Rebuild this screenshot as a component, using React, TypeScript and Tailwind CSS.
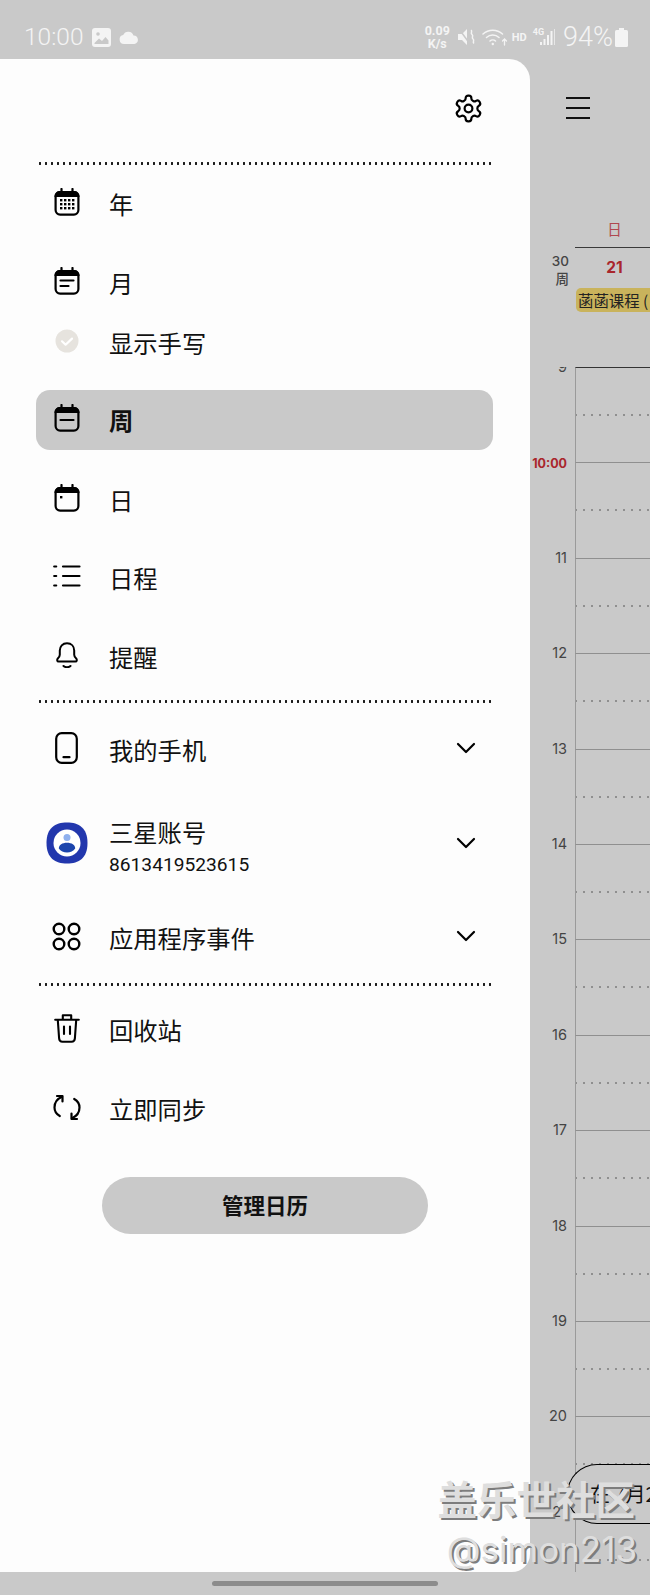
import type { ReactNode } from 'react';

const cjk = "font-['Noto_Sans_CJK_SC','Noto_Sans',sans-serif]";

function CalendarBase({ children }: { children?: ReactNode }) {
  return (
    <svg width="26" height="28" viewBox="0 0 26 28" fill="none" stroke="#000" strokeWidth="2.2">
      <rect x="1.6" y="4.2" width="22.8" height="22.4" rx="4.5" />
      <path d="M1.6 8v-.2a3.800 3.800 0 0 1 3.800-3.600h15.200a3.800 3.800 0 0 1 3.800 3.600V8z" fill="#000" />
      <path d="M7.5 1v5M18.5 1v5" strokeLinecap="round" />
      {children}
    </svg>
  );
}

const YearIcon = () => (
  <CalendarBase>
    <g fill="#000" stroke="none">
      {[11, 15, 19].map((y) =>
        [6, 10, 14, 18].map((x) => <rect key={`${x}-${y}`} x={x} y={y} width="2.4" height="2.4" />),
      )}
    </g>
  </CalendarBase>
);

const MonthIcon = () => (
  <CalendarBase>
    <path d="M6.5 13.500h13M6.5 19h8" strokeLinecap="round" />
  </CalendarBase>
);

const WeekIcon = () => (
  <CalendarBase>
    <path d="M6.5 16h13" strokeLinecap="round" />
  </CalendarBase>
);

const DayIcon = () => (
  <CalendarBase>
    <rect x="6" y="12" width="2.4" height="2.4" fill="#000" stroke="none" />
  </CalendarBase>
);

const CheckIcon = () => (
  <svg width="24" height="24" viewBox="0 0 24 24">
    <circle cx="12" cy="12" r="11.5" fill="#e6e3de" />
    <path d="M7 12.3l3.6 3.4L17 9.6" fill="none" stroke="#fff" strokeWidth="2.2" strokeLinecap="round" strokeLinejoin="round" />
  </svg>
);

const ListIcon = () => (
  <svg width="28" height="22" viewBox="0 0 28 22" fill="none" stroke="#000" strokeWidth="2.2" strokeLinecap="round">
    <path d="M1.2 1.5h2M1.2 11h2M1.2 20.5h2M10 1.5h16.5M10 11h16.5M10 20.5h16.5" />
  </svg>
);

const BellIcon = () => (
  <svg width="24" height="26" viewBox="0 0 24 26" fill="none" stroke="#000" strokeWidth="2" strokeLinejoin="round">
    <path d="M12 1.2c-4.4 0-7.2 3.2-7.2 7.4v4.2c0 1.600-.7 2.600-2 3.800-1 .9-.8 3 .8 3h16.800c1.600 0 1.800-2.100.8-3-1.300-1.200-2-2.200-2-3.800V8.600c0-4.200-2.800-7.400-7.200-7.400z" />
    <path d="M8.500 24c1 .9 2.200 1.200 3.500 1.200s2.500-.3 3.500-1.200" strokeLinecap="round" />
  </svg>
);

const PhoneIcon = () => (
  <svg width="23" height="32" viewBox="0 0 23 32" fill="none" stroke="#000" strokeWidth="2.200">
    <rect x="1.200" y="1.200" width="20.600" height="29.600" rx="5.500" />
    <path d="M8.500 25.200h6" strokeLinecap="round" />
  </svg>
);

const AppsIcon = () => (
  <svg width="29" height="29" viewBox="0 0 29 29" fill="none" stroke="#000" strokeWidth="2.400">
    <circle cx="7" cy="7" r="5.300" />
    <circle cx="22" cy="7" r="5.300" />
    <circle cx="7" cy="22" r="5.300" />
    <circle cx="22" cy="22" r="5.300" />
  </svg>
);

const TrashIcon = () => (
  <svg width="26" height="29" viewBox="0 0 26 29" fill="none" stroke="#000" strokeWidth="2.100" strokeLinecap="round" strokeLinejoin="round">
    <path d="M1.200 5.800h23.600M8.800 5.500V1.300h8.400v4.200" />
    <path d="M3.800 6l1.300 18.300c.1 2 1.400 3.500 3.400 3.500h9c2 0 3.300-1.500 3.400-3.500L22.200 6" />
    <path d="M10 12.500v7.500M16 12.500v7.500" />
  </svg>
);

const SyncIcon = () => (
  <svg width="28" height="27" viewBox="0 0 28 27" fill="none" stroke="#000" strokeWidth="2.200" strokeLinecap="round" strokeLinejoin="round">
    <path d="M9.500 7.500V2h-5.500" />
    <path d="M9 2.800C4.300 4.800 1.500 8.800 1.500 13.500c0 3.600 2 6.700 5.300 8.500" />
    <path d="M18.500 19.500V25h5.500" />
    <path d="M19 24.200c4.700-2 7.500-6 7.500-10.700 0-3.600-2-6.700-5.300-8.500" />
  </svg>
);

const ChevronDown = () => (
  <svg width="20" height="12" viewBox="0 0 20 12" fill="none" stroke="#000" strokeWidth="2.200" strokeLinecap="round" strokeLinejoin="round">
    <path d="M2 2l8 8 8-8" />
  </svg>
);

const GearIcon = () => (
  <svg width="31" height="31" viewBox="0 0 24 24" fill="none" stroke="#000" strokeWidth="1.700" strokeLinecap="round" strokeLinejoin="round">
    <path d="M12.220 2h-.44a2 2 0 0 0-2 2v.18a2 2 0 0 1-1 1.730l-.43.250a2 2 0 0 1-2 0l-.15-.080a2 2 0 0 0-2.730.730l-.220.380a2 2 0 0 0 .730 2.730l.150.100a2 2 0 0 1 1 1.720v.510a2 2 0 0 1-1 1.740l-.150.090a2 2 0 0 0-.730 2.730l.220.380a2 2 0 0 0 2.730.730l.150-.080a2 2 0 0 1 2 0l.430.250a2 2 0 0 1 1 1.730V20a2 2 0 0 0 2 2h.440a2 2 0 0 0 2-2v-.180a2 2 0 0 1 1-1.730l.430-.250a2 2 0 0 1 2 0l.150.080a2 2 0 0 0 2.730-.730l.220-.390a2 2 0 0 0-.730-2.730l-.150-.080a2 2 0 0 1-1-1.740v-.500a2 2 0 0 1 1-1.740l.150-.090a2 2 0 0 0 .730-2.730l-.220-.380a2 2 0 0 0-2.730-.730l-.150.080a2 2 0 0 1-2 0l-.430-.250a2 2 0 0 1-1-1.730V4a2 2 0 0 0-2-2z" />
    <circle cx="12" cy="12" r="3" />
  </svg>
);

const SamsungAccountIcon = () => (
  <svg width="42" height="42" viewBox="0 0 42 42">
    <path d="M21 .5c12 0 20.500 5.500 20.500 20.500S33 41.500 21 41.500.5 36 .5 21 9 .5 21 .5z" fill="#2237ad" />
    <circle cx="21" cy="21" r="13.500" fill="#fff" />
    <circle cx="21" cy="15.500" r="3.500" fill="#8fb0ee" />
    <path d="M12.800 26.500c0-3.600 3.600-5.700 8.200-5.700s8.200 2.100 8.200 5.700c-1.800 2.600-4.800 3.900-8.200 3.900s-6.400-1.300-8.200-3.900z" fill="#1c45ad" />
  </svg>
);

function Divider({ className = '' }: { className?: string }) {
  return (
    <div
      className={`ml-[37px] h-[3px] w-[454px] bg-[radial-gradient(circle,#1a1a1a_1.100px,transparent_1.400px)] bg-[length:6px_3px] ${className}`}
    />
  );
}

function NavRow({
  icon,
  label,
  sub,
  active,
  chevron,
  className = '',
}: {
  icon: ReactNode;
  label: string;
  sub?: string;
  active?: boolean;
  chevron?: boolean;
  className?: string;
}) {
  return (
    <div
      className={`ml-9 flex h-[60px] w-[457px] shrink-0 items-center rounded-[14px] ${active ? 'bg-[#c9c9c9]' : ''} ${className}`}
    >
      <div className="flex w-[61px] shrink-0 -translate-y-0.5 justify-center">{icon}</div>
      <div className={`ml-3 flex min-w-0 flex-1 flex-col ${sub ? 'translate-y-0.5' : ''}`}>
        <span className={`${cjk} text-[24.300px] leading-[30px] text-[#111] ${active ? 'font-bold' : ''}`}>{label}</span>
        {sub && <span className="mt-[6px] font-['Roboto',sans-serif] text-[19.200px] leading-[24px] text-[#111]">{sub}</span>}
      </div>
      {chevron && (
        <div className="mr-[17px] -translate-y-0.5">
          <ChevronDown />
        </div>
      )}
    </div>
  );
}

function StatusBar() {
  return (
    <div className="flex h-[59px] items-center justify-between pl-6 pr-[22px] pt-[15px] text-[#f4f4f4]">
      <div className="flex items-center">
        <span className="font-['Roboto',sans-serif] text-[24.500px] font-light leading-none">10:00</span>
        <svg className="ml-2" width="19" height="19" viewBox="0 0 19 19">
          <rect width="19" height="19" rx="3" fill="#f4f4f4" />
          <circle cx="6" cy="6" r="1.800" fill="#c9c9c9" />
          <path d="M2.500 15l4.500-4.500 3 2.500 3.500-4 3 3.500V16h-14z" fill="#c9c9c9" />
        </svg>
        <svg className="ml-2" width="20" height="14" viewBox="0 0 20 14">
          <path d="M5 14a4.500 4.500 0 0 1-.8-8.900A5.500 5.500 0 0 1 14.500 5.500 4.300 4.300 0 0 1 15.500 14z" fill="#f4f4f4" />
        </svg>
      </div>
      <div className="flex items-center">
        <div className="flex flex-col items-center font-['Roboto',sans-serif] text-[12.500px] font-bold leading-[13px]">
          <span>0.09</span>
          <span>K/s</span>
        </div>
        <svg className="ml-2" width="18" height="16" viewBox="0 0 18 16" fill="#f4f4f4">
          <path d="M0 5h4l5-5v16l-5-5H0z" />
          <path d="M1 0l11 15" stroke="#c9c9c9" strokeWidth="1.500" />
          <path d="M13 1c2 1.500-1 3 1 4.500s-1 3 1 4.500-1 3 1 4.500" stroke="#f4f4f4" strokeWidth="1.500" fill="none" />
        </svg>
        <svg className="ml-1.5" width="26" height="18" viewBox="0 0 26 18" fill="none" stroke="#f4f4f4" strokeWidth="1.500" strokeLinecap="round">
          <path d="M1 6c5.500-5 14-5 19.500 0M4.500 9.500c3.500-3.200 9-3.200 12.500 0M8 13c1.500-1.400 4-1.400 5.500 0" />
          <circle cx="10.800" cy="16" r="1.200" fill="#f4f4f4" stroke="none" />
          <path d="M22.500 17v-6M20.500 13l2-2 2 2" strokeWidth="1.300" />
        </svg>
        <span className="ml-1 font-['Roboto',sans-serif] text-[11px] font-bold leading-none">HD</span>
        <div className="ml-1.5 flex items-end">
          <span className="-mt-2 mb-2 font-['Roboto',sans-serif] text-[9px] font-bold leading-none">4G</span>
          <svg className="-ml-1" width="15" height="16" viewBox="0 0 15 16" fill="#f4f4f4">
            <rect x="0" y="13" width="2" height="3" />
            <rect x="3.500" y="10" width="2" height="6" />
            <rect x="7" y="6" width="2" height="10" />
            <rect x="10.500" y="2" width="2" height="14" />
            <rect x="14" y="0" width="1" height="16" opacity=".7" />
          </svg>
        </div>
        <span className="ml-2 font-['Roboto',sans-serif] text-[27px] font-light leading-none">94%</span>
        <svg className="ml-0.5" width="13" height="19" viewBox="0 0 13 19" fill="#f4f4f4">
          <rect x="4" y="0" width="5" height="2" />
          <rect x="0" y="2" width="13" height="17" rx="1.500" />
        </svg>
      </div>
    </div>
  );
}

function Drawer() {
  return (
    <div className="flex h-[1513px] w-[530px] shrink-0 flex-col rounded-tr-[21px] rounded-br-[18px] bg-[#fdfdfd]">
      <div className="flex h-[103px] shrink-0 items-center justify-end pr-[46px] pb-1">
        <GearIcon />
      </div>
      <Divider />
      <NavRow icon={<YearIcon />} label="年" className="mt-[9px]" />
      <NavRow icon={<MonthIcon />} label="月" className="mt-[19px]" />
      <NavRow icon={<CheckIcon />} label="显示手写" />
      <NavRow icon={<WeekIcon />} label="周" active className="mt-[17px]" />
      <NavRow icon={<DayIcon />} label="日" className="mt-5" />
      <NavRow icon={<ListIcon />} label="日程" className="mt-[18px]" />
      <NavRow icon={<BellIcon />} label="提醒" className="mt-[19px]" />
      <Divider className="mt-[13px]" />
      <NavRow icon={<PhoneIcon />} label="我的手机" chevron className="mt-[17px]" />
      <NavRow icon={<SamsungAccountIcon />} label="三星账号" sub="8613419523615" chevron className="mt-[35px]" />
      <NavRow icon={<AppsIcon />} label="应用程序事件" chevron className="mt-[33px]" />
      <Divider className="mt-[15px]" />
      <NavRow icon={<TrashIcon />} label="回收站" className="mt-[14px]" />
      <NavRow icon={<SyncIcon />} label="立即同步" className="mt-[19px]" />
      <button
        className={`${cjk} ml-[102px] mt-[38px] h-[57px] w-[326px] rounded-full bg-[#c9c9c9] text-[21.500px] font-bold text-[#111]`}
      >
        管理日历
      </button>
    </div>
  );
}

const HOURS = ['9', '10:00', '11', '12', '13', '14', '15', '16', '17', '18', '19', '20', '21'];

function CalendarColumn() {
  return (
    <div className="relative flex h-[1513px] min-w-0 flex-1 flex-col">
      <div className="flex h-[308px] shrink-0 flex-col">
        <div className="ml-[36px] mt-[38px] flex w-6 flex-col gap-2">
          <div className="h-0.5 bg-[#111]" />
          <div className="h-0.5 bg-[#111]" />
          <div className="h-0.5 bg-[#111]" />
        </div>
        <div className="mt-[102px] flex">
          <div className="mt-[32px] w-[39px] shrink-0 text-right font-['Inter',sans-serif] text-[13.500px] font-medium leading-[17px] text-[#444]">
            <div>30</div>
            <div className={cjk}>周</div>
          </div>
          <div className="ml-[6px] min-w-0 flex-1">
            <div className={`${cjk} h-[16px] w-[79px] text-center text-[14.500px] leading-[16px] text-[#b0474f]`}>日</div>
            <div className="mt-[10px] w-[79px] border-t-[1.500px] border-[#3a3a3a] pt-[10px] text-center font-['Inter',sans-serif] text-[15.500px] font-bold leading-[20px] text-[#a9262c]">
              21
            </div>
            <div className={`${cjk} ml-[1px] mt-[10px] h-6 overflow-hidden whitespace-nowrap rounded-l-[5px] bg-[#c9b35c] pl-0.5 text-[15.400px] leading-6 text-[#222]`}>
              菡菡课程 (
            </div>
          </div>
        </div>
      </div>
      <div className="min-h-0 flex-1 overflow-hidden">
        {HOURS.map((h, i) => (
          <div key={h} className="flex h-[95.400px]">
            <div
              className={`w-[37px] shrink-0 -translate-y-1/2 self-start whitespace-nowrap text-right font-['Inter',sans-serif] leading-none ${
                h === '10:00' ? 'mt-0.5 text-[12.500px] font-bold text-[#a9262c]' : 'text-[14.500px] text-[#444]'
              }`}
            >
              {h}
            </div>
            <div
              className={`ml-2 flex-1 border-l-[1.500px] border-t-[1.500px] border-l-[#9a9a9a] ${
                i === 0 ? 'border-t-[#333]' : 'border-t-[#8f8f8f]'
              }`}
            >
              <div className="mt-[46px] h-[2px] bg-[radial-gradient(circle,#8f8f8f_0.800px,transparent_1px)] bg-[length:8px_2px] bg-[position:-4px_0]" />
            </div>
          </div>
        ))}
      </div>
      {/* event pill floats over the grid */}
      <div className={`${cjk} absolute left-[37px] top-[1405px] flex h-[60px] w-[100px] items-center whitespace-nowrap rounded-l-[30px] border-[1.500px] border-r-0 border-black bg-[#c9c9c9] pl-[22px] text-[20px] text-[#111]`}>
        在 7月2
      </div>
    </div>
  );
}

export default function App() {
  return (
    <div className="relative h-[1595px] w-[650px] overflow-hidden bg-[#c9c9c9]">
      <StatusBar />
      <div className="flex">
        <Drawer />
        <CalendarColumn />
      </div>
      <div className="mx-auto mt-[9px] h-[5px] w-[226px] rounded-full bg-[#8c8c8c]" />
      {/* forum watermark baked into the screenshot */}
      <div className="absolute right-[13px] top-[1472px] flex flex-col items-end text-[#dedede] [text-shadow:2px_2px_0_#7d7d7d]">
        <span className={`${cjk} mr-[2px] text-[39.500px] font-bold leading-[52px]`}>盖乐世社区</span>
        <span className="mt-[4px] font-['Inter',sans-serif] text-[35px] leading-[42px]">@simon213</span>
      </div>
    </div>
  );
}
